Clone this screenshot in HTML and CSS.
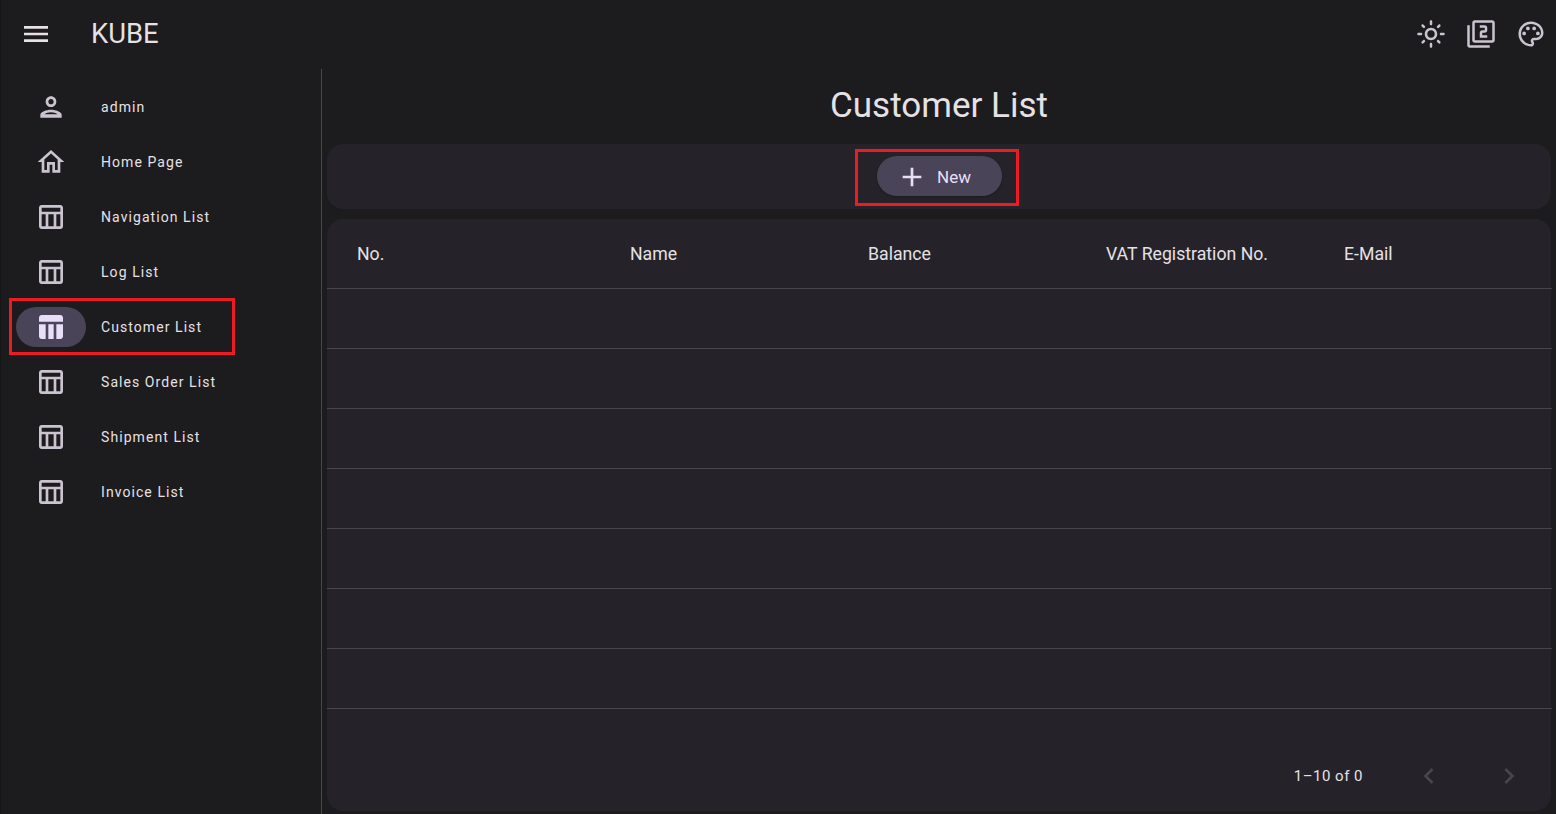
FILE: index.html
```html
<!DOCTYPE html>
<html lang="en">

<head>
  <meta charset="UTF-8">
  <meta name="viewport" content="width=device-width, initial-scale=1.0">
  <title>Customer List</title>
  <link rel="stylesheet" href="styles.css">
</head>

<body>
  <svg class="sprite" aria-hidden="true">
    <symbol id="i-menu" viewBox="0 0 24 24"><path d="M3 18h18v-2H3v2zm0-5h18v-2H3v2zm0-7v2h18V6H3z"/></symbol>
    <symbol id="i-sun" viewBox="0 0 24 24"><path d="M12 9c1.65 0 3 1.35 3 3s-1.35 3-3 3-3-1.35-3-3 1.35-3 3-3m0-2c-2.76 0-5 2.24-5 5s2.24 5 5 5 5-2.24 5-5-2.24-5-5-5zM2 13h2c.55 0 1-.45 1-1s-.45-1-1-1H2c-.55 0-1 .45-1 1s.45 1 1 1zm18 0h2c.55 0 1-.45 1-1s-.45-1-1-1h-2c-.55 0-1 .45-1 1s.45 1 1 1zM11 2v2c0 .55.45 1 1 1s1-.45 1-1V2c0-.55-.45-1-1-1s-1 .45-1 1zm0 18v2c0 .55.45 1 1 1s1-.45 1-1v-2c0-.55-.45-1-1-1s-1 .45-1 1zM5.99 4.58c-.39-.39-1.03-.39-1.41 0-.39.39-.39 1.03 0 1.41l1.06 1.06c.39.39 1.03.39 1.41 0s.39-1.03 0-1.41L5.99 4.58zm12.37 12.37c-.39-.39-1.03-.39-1.41 0-.39.39-.39 1.03 0 1.41l1.06 1.06c.39.39 1.03.39 1.41 0 .39-.39.39-1.03 0-1.41l-1.06-1.06zm1.06-10.96c.39-.39.39-1.03 0-1.41-.39-.39-1.03-.39-1.41 0l-1.06 1.06c-.39.39-.39 1.03 0 1.41s1.03.39 1.41 0l1.06-1.06zM7.05 18.36c.39-.39.39-1.03 0-1.41-.39-.39-1.03-.39-1.41 0l-1.06 1.06c-.39.39-.39 1.03 0 1.41s1.03.39 1.41 0l1.06-1.06z"/></symbol>
    <symbol id="i-filter2" viewBox="0 0 24 24"><path d="M3 5H1v16c0 1.1.9 2 2 2h16v-2H3V5zm18-4H7c-1.1 0-2 .9-2 2v14c0 1.1.9 2 2 2h14c1.1 0 2-.9 2-2V3c0-1.1-.9-2-2-2zm0 16H7V3h14v14zm-4-4h-4v-2h2c1.1 0 2-.89 2-2V7c0-1.11-.9-2-2-2h-4v2h4v2h-2c-1.1 0-2 .89-2 2v4h6v-2z"/></symbol>
    <symbol id="i-palette" viewBox="0 0 24 24"><path d="M12 22C6.49 22 2 17.51 2 12S6.49 2 12 2s10 4.04 10 9c0 3.31-2.69 6-6 6h-1.77c-.28 0-.5.22-.5.5 0 .12.05.23.13.33.41.47.64 1.06.64 1.67 0 1.38-1.12 2.5-2.5 2.5zm0-18c-4.41 0-8 3.59-8 8s3.59 8 8 8c.28 0 .5-.22.5-.5 0-.16-.08-.28-.14-.35-.41-.46-.63-1.05-.63-1.65 0-1.38 1.12-2.5 2.5-2.5H16c2.21 0 4-1.79 4-4 0-3.86-3.59-7-8-7z"/><circle cx="6.5" cy="11.5" r="1.5"/><circle cx="9.5" cy="7.5" r="1.5"/><circle cx="14.5" cy="7.5" r="1.5"/><circle cx="17.5" cy="11.5" r="1.5"/></symbol>
    <symbol id="i-person" viewBox="0 0 24 24"><path fill-rule="evenodd" d="M12 6c1.1 0 2 .9 2 2s-.9 2-2 2-2-.9-2-2 .9-2 2-2m0-2C9.790 4 8 5.790 8 8s1.790 4 4 4 4-1.790 4-4-1.790-4-4-4zm0 10c-3.500 0-8 1.600-8 3.900V20h16v-2.100c0-2.300-4.500-3.900-8-3.900zm-5 3.400c1.100-.9 3.200-1.500 5-1.500s3.900.6 5 1.500z"/></symbol>
    <symbol id="i-home" viewBox="0 0 24 24"><path d="M12 5.690l5 4.500V18h-2v-6H9v6H7v-7.810l5-4.500M12 3L2 12h3v8h6v-6h2v6h6v-8h3L12 3z"/></symbol>
    <symbol id="i-table" viewBox="0 0 24 24"><path d="M19 3H5c-1.100 0-2 .9-2 2v14c0 1.100.9 2 2 2h14c1.100 0 2-.9 2-2V5c0-1.100-.9-2-2-2zM5 5h14v3H5V5zm0 5h3v9H5v-9zm5 0h4v9h-4v-9zm6 9v-9h3v9h-3z"/></symbol>
    <symbol id="i-table-filled" viewBox="0 0 24 24"><path d="M5 3h14c1.100 0 2 .9 2 2v3H3V5c0-1.100.9-2 2-2zM3 10h5v11H5c-1.100 0-2-.9-2-2v-9zm7 0h4v11h-4V10zm6 0h5v9c0 1.100-.9 2-2 2h-3V10z"/></symbol>
    <symbol id="i-plus" viewBox="0 0 24 24"><path d="M19 13h-6v6h-2v-6H5v-2h6V5h2v6h6v2z"/></symbol>
    <symbol id="i-prev" viewBox="0 0 24 24"><path d="M15.410 7.410L14 6l-6 6 6 6 1.410-1.410L10.830 12z"/></symbol>
    <symbol id="i-next" viewBox="0 0 24 24"><path d="M10 6L8.590 7.410 13.170 12l-4.580 4.580L10 18l6-6z"/></symbol>
  </svg>

  <header class="topbar">
    <svg class="icon menu-icon"><use href="#i-menu"/></svg>
    <div class="brand">KUBE</div>
    <div class="topbar-actions">
      <svg class="icon"><use href="#i-sun"/></svg>
      <svg class="icon"><use href="#i-filter2"/></svg>
      <svg class="icon"><use href="#i-palette"/></svg>
    </div>
  </header>

  <div class="layout">
    <nav class="sidebar">
      <a class="nav-item"><span class="nav-pill"><svg class="icon"><use href="#i-person"/></svg></span>admin</a>
      <a class="nav-item"><span class="nav-pill"><svg class="icon"><use href="#i-home"/></svg></span>Home Page</a>
      <a class="nav-item"><span class="nav-pill"><svg class="icon"><use href="#i-table"/></svg></span>Navigation List</a>
      <a class="nav-item"><span class="nav-pill"><svg class="icon"><use href="#i-table"/></svg></span>Log List</a>
      <a class="nav-item active"><span class="nav-pill"><svg class="icon"><use href="#i-table-filled"/></svg></span>Customer List<span class="highlight highlight-nav"></span></a>
      <a class="nav-item"><span class="nav-pill"><svg class="icon"><use href="#i-table"/></svg></span>Sales Order List</a>
      <a class="nav-item"><span class="nav-pill"><svg class="icon"><use href="#i-table"/></svg></span>Shipment List</a>
      <a class="nav-item"><span class="nav-pill"><svg class="icon"><use href="#i-table"/></svg></span>Invoice List</a>
    </nav>

    <main class="content">
      <h1 class="page-title">Customer List</h1>

      <div class="card toolbar">
        <button class="new-btn" type="button"><svg class="icon"><use href="#i-plus"/></svg>New<span class="highlight highlight-btn"></span></button>
      </div>

      <div class="card table-card">
        <table>
          <thead>
            <tr>
              <th>No.</th>
              <th>Name</th>
              <th>Balance</th>
              <th>VAT Registration No.</th>
              <th>E-Mail</th>
            </tr>
          </thead>
          <tbody>
            <tr><td colspan="5"></td></tr>
            <tr><td colspan="5"></td></tr>
            <tr><td colspan="5"></td></tr>
            <tr><td colspan="5"></td></tr>
            <tr><td colspan="5"></td></tr>
            <tr><td colspan="5"></td></tr>
            <tr><td colspan="5"></td></tr>
          </tbody>
        </table>
        <div class="pager">
          <span class="pager-text">1–10 of 0</span>
          <svg class="icon pager-icon"><use href="#i-prev"/></svg>
          <svg class="icon pager-icon"><use href="#i-next"/></svg>
        </div>
      </div>
    </main>
  </div>
</body>

</html>
```

FILE: styles.css
```css
html,
body {
  height: 100%;
}

body {
  margin: 0;
  background-color: #1c1b1d;
  box-shadow: inset 1px 0 #151517;
  color: #e6e1e5;
  font-family: Roboto, "Liberation Sans", sans-serif;
  display: flex;
  flex-direction: column;
  overflow: hidden;
}

.sprite {
  display: none;
}

.icon {
  width: 32px;
  height: 32px;
  fill: #cac4d0;
  flex-shrink: 0;
}

.topbar {
  height: 69px;
  display: flex;
  align-items: center;
  box-sizing: border-box;
  padding: 0 10px 2px 20px;
}

.menu-icon {
  fill: #e6e1e5;
}

.brand {
  margin-left: 39px;
  font-size: 27.4px;
  font-weight: 400;
}

.topbar-actions {
  margin-left: auto;
  display: flex;
  gap: 20px;
}

.topbar-actions .icon {
  width: 30px;
  height: 30px;
}

.layout {
  flex: 1;
  display: flex;
  min-height: 0;
}

.sidebar {
  width: 322px;
  box-sizing: border-box;
  border-right: 1px solid #49454f;
  padding: 10px 0 0 16px;
}

.nav-item {
  position: relative;
  height: 55px;
  display: flex;
  align-items: center;
  gap: 15px;
  font-size: 14px;
  font-weight: 400;
  letter-spacing: 1.07px;
  color: #e6e1e5;
}

.nav-pill {
  width: 70px;
  height: 40px;
  border-radius: 20px;
  display: flex;
  align-items: center;
  justify-content: center;
}

.active .nav-pill {
  background-color: #4a4458;
}

.active .icon {
  fill: #e8def8;
}

.highlight {
  position: absolute;
  border: 3px solid #ed1c24;
  box-sizing: border-box;
  pointer-events: none;
}

.highlight-nav {
  left: -7px;
  top: -1px;
  width: 226px;
  height: 57px;
}

.highlight-btn {
  left: -22px;
  top: -7px;
  width: 164px;
  height: 57px;
}

.content {
  flex: 1;
  min-width: 0;
  padding: 0 5px 3px 5px;
  display: flex;
  flex-direction: column;
}

.page-title {
  margin: 0;
  height: 75px;
  line-height: 73px;
  text-align: center;
  font-size: 35px;
  font-weight: 400;
}

.card {
  background-color: #252329;
  border-radius: 16px;
}

.toolbar {
  height: 65px;
  box-sizing: border-box;
  padding-top: 12px;
  display: flex;
  align-items: flex-start;
  justify-content: center;
  margin-bottom: 10px;
}

.new-btn {
  position: relative;
  height: 40px;
  width: 125px;
  padding: 1px 0 0 18.5px;
  margin-left: 1px;
  border: none;
  border-radius: 20px;
  background-color: #4a4458;
  color: #e8def8;
  font-family: inherit;
  font-size: 17px;
  font-weight: 400;
  display: flex;
  align-items: center;
  gap: 9.5px;
  box-shadow: 0 1px 2px rgba(0, 0, 0, 0.3);
}

.new-btn .icon {
  fill: #e8def8;
}

.table-card {
  flex: 1;
  display: flex;
  flex-direction: column;
  min-height: 0;
}

table {
  width: 100%;
  border-collapse: collapse;
  table-layout: fixed;
}

th {
  height: 69px;
  padding: 1px 0 0 30px;
  width: 238px;
  box-sizing: border-box;
  text-align: left;
  font-size: 17.7px;
  font-weight: 400;
  border-bottom: 1px solid #49454f;
}

th:first-child {
  width: 273px;
}

td {
  height: 59px;
  padding: 0;
  border-bottom: 1px solid #49454f;
}

.pager {
  margin-top: auto;
  height: 70px;
  display: flex;
  align-items: center;
  justify-content: flex-end;
  padding-right: 26px;
}

.pager-text {
  font-size: 15px;
  font-weight: 400;
  letter-spacing: 0.5px;
  margin-right: 50px;
}

.pager-icon {
  fill: #49454f;
}

.pager-icon + .pager-icon {
  margin-left: 48px;
}
```
